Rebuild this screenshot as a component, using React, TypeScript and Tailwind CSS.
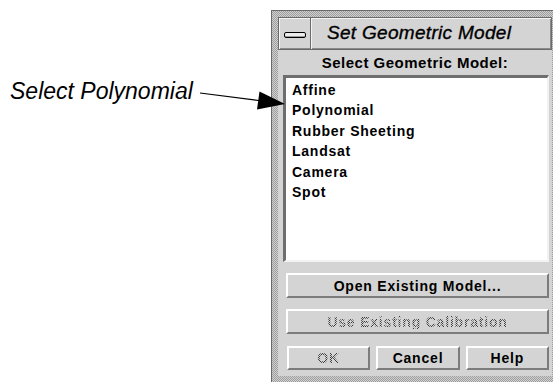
export default function App() {
  const items = ["Affine", "Polynomial", "Rubber Sheeting", "Landsat", "Camera", "Spot"];
  const btn =
    "flex items-center justify-center border-2 border-t-white border-l-white border-b-[#7c7c7c] border-r-[#7c7c7c] bg-[#d4d4d4] text-[14px] font-bold leading-none tracking-[0.8px]";
  const stipple =
    "bg-[repeating-conic-gradient(#3c3c3c_0_25%,#d4d4d4_0_50%)] bg-[length:2px_2px] bg-clip-text text-transparent";
  return (
    <div className="relative flex h-[382px] w-[553px] overflow-hidden bg-white font-['Liberation_Sans',Arial,sans-serif] text-black">
      <div className="w-[271px] shrink-0 pl-[10px] pt-[80px]">
        <span className="block text-[23px] italic leading-none">Select Polynomial</span>
      </div>

      <div className="mt-[10px] w-[287px] shrink-0 self-start border-l border-t border-[#6a6a6a] bg-[repeating-conic-gradient(#9e9e9e_0_25%,#d0d0d0_0_50%)] bg-[length:2px_2px] pb-[7px] pl-[6px] pr-[6px] pt-[6px]">
        <div className="flex h-[33px] border border-[#6a6a6a] bg-[#d4d4d4] shadow-[inset_1px_1px_0_#f4f4f4,inset_-1px_-1px_0_#8a8a8a]">
          <div className="flex w-[32px] items-center justify-center border-r border-r-[#6a6a6a] shadow-[1px_0_0_#f4f4f4]">
            <div className="mt-[3px] h-[6px] w-[22px] rounded-[2px] border border-black bg-[#ececec] shadow-[inset_0_-1px_0_#9a9a9a]" />
          </div>
          <div className="flex-1 pl-[16px] pt-[5px]">
            <span className="block text-[19px] italic leading-none tracking-[0.3px] [-webkit-text-stroke:0.35px_black]">
              Set Geometric Model
            </span>
          </div>
        </div>

        <div className="flex h-[326px] flex-col bg-[#d4d4d4]">
          <div className="flex h-[24px] items-center justify-center text-[15px] font-bold leading-none tracking-[0.5px]">
            Select Geometric Model:
          </div>
          <div className="ml-[5px] mr-[3px] mt-[1px] h-[187px] border-[3px] border-b-2 border-r-2 border-t-[#6e6e6e] border-l-[#6e6e6e] border-b-[#f2f2f2] border-r-[#f2f2f2] bg-white pl-[6px] pt-[2px]">
            {items.map((it) => (
              <div key={it} className="h-[20.4px] text-[14px] font-bold leading-[20.4px] tracking-[0.75px]">
                {it}
              </div>
            ))}
          </div>
          <div className={`ml-[8px] mr-[3px] mt-[11px] h-[25px] ${btn}`}>Open Existing Model...</div>
          <div className={`ml-[8px] mr-[3px] mt-[11px] h-[25px] ${btn}`}>
            <span className={stipple}>Use Existing Calibration</span>
          </div>
          <div className="ml-[9px] mr-[3px] mt-[12px] grid h-[24px] grid-cols-3 gap-[6px]">
            <div className={btn}>
              <span className={stipple}>OK</span>
            </div>
            <div className={btn}>Cancel</div>
            <div className={btn}>Help</div>
          </div>
        </div>
      </div>

      <svg className="pointer-events-none absolute inset-0" width="553" height="382" viewBox="0 0 553 382">
        <line x1="200" y1="93" x2="262" y2="101" stroke="black" strokeWidth="1.2" />
        <polygon points="285,104 257,109.5 259.5,91.5" fill="black" />
      </svg>
    </div>
  );
}
